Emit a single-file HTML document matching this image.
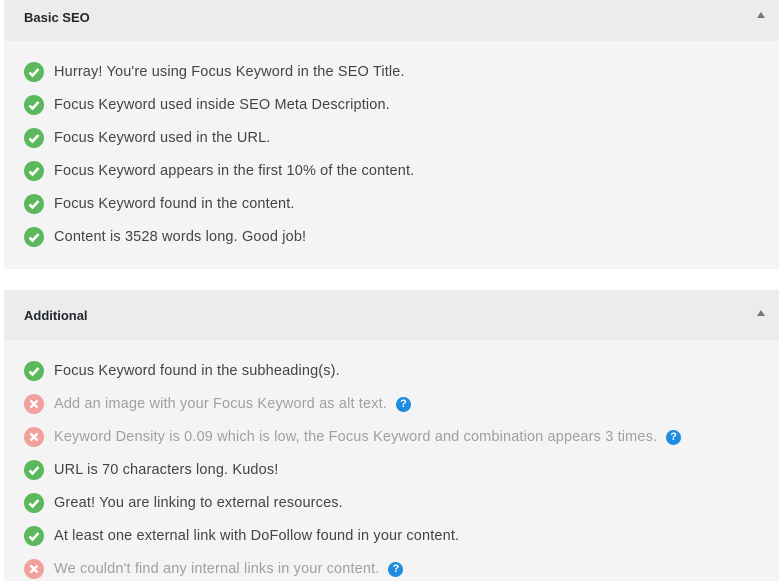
<!DOCTYPE html>
<html><head><meta charset="utf-8"><style>
*{margin:0;padding:0;box-sizing:border-box}
body{width:779px;height:581px;background:#fff;font-family:"Liberation Sans",sans-serif;overflow:hidden;position:relative}
.hd{position:absolute;left:4px;width:775px;background:#ececec;font-weight:bold;font-size:13px;color:#23282d;padding-left:20px}
.bd{position:absolute;left:4px;width:775px;background:#f4f4f4}
.arr{position:absolute;right:14px;width:0;height:0;border-left:4px solid transparent;border-right:4px solid transparent;border-bottom:6px solid #777}
.row{position:absolute;left:24px;height:20px;display:flex;align-items:center;font-size:14.5px;letter-spacing:0.15px;color:#444;white-space:nowrap}
.row.bad{color:#a0a0a0}
.ic{width:20px;height:20px;border-radius:50%;margin-right:10px;flex:none;display:flex;align-items:center;justify-content:center}
.ok{background:#5cb85c}.no{background:#f2a09b}
.q{display:inline-flex;width:15px;height:15px;border-radius:50%;background:#1e8cdf;color:#fff;font-size:11px;font-weight:bold;align-items:center;justify-content:center;margin-left:9px;letter-spacing:0}
</style></head><body>
<div class="hd" style="top:0;height:41px;line-height:36px">Basic SEO<div class="arr" style="top:12px"></div></div>
<div class="bd" style="top:41px;height:228px"></div>
<div class="hd" style="top:290px;height:50px;line-height:52px">Additional<div class="arr" style="top:20px"></div></div>
<div class="bd" style="top:340px;height:241px"></div>
<svg width="0" height="0" style="position:absolute"><defs>
<symbol id="c" viewBox="0 0 20 20"><path d="M5.5 10.5l3 3 6-6.5" fill="none" stroke="#fff" stroke-width="2.6"/></symbol>
<symbol id="x" viewBox="0 0 20 20"><path d="M6.5 6.5l7 7M13.5 6.5l-7 7" fill="none" stroke="#fff" stroke-width="2.4"/></symbol>
</defs></svg>
<div class="row" style="top:62px"><span class="ic ok"><svg width="20" height="20"><use href="#c"/></svg></span>Hurray! You're using Focus Keyword in the SEO Title.</div>
<div class="row" style="top:95px"><span class="ic ok"><svg width="20" height="20"><use href="#c"/></svg></span>Focus Keyword used inside SEO Meta Description.</div>
<div class="row" style="top:128px"><span class="ic ok"><svg width="20" height="20"><use href="#c"/></svg></span>Focus Keyword used in the URL.</div>
<div class="row" style="top:161px"><span class="ic ok"><svg width="20" height="20"><use href="#c"/></svg></span>Focus Keyword appears in the first 10% of the content.</div>
<div class="row" style="top:194px"><span class="ic ok"><svg width="20" height="20"><use href="#c"/></svg></span>Focus Keyword found in the content.</div>
<div class="row" style="top:227px"><span class="ic ok"><svg width="20" height="20"><use href="#c"/></svg></span>Content is 3528 words long. Good job!</div>
<div class="row" style="top:361px"><span class="ic ok"><svg width="20" height="20"><use href="#c"/></svg></span>Focus Keyword found in the subheading(s).</div>
<div class="row bad" style="top:394px"><span class="ic no"><svg width="20" height="20"><use href="#x"/></svg></span>Add an image with your Focus Keyword as alt text.<span class="q">?</span></div>
<div class="row bad" style="top:427px"><span class="ic no"><svg width="20" height="20"><use href="#x"/></svg></span>Keyword Density is 0.09 which is low, the Focus Keyword and combination appears 3 times.<span class="q">?</span></div>
<div class="row" style="top:460px"><span class="ic ok"><svg width="20" height="20"><use href="#c"/></svg></span>URL is 70 characters long. Kudos!</div>
<div class="row" style="top:493px"><span class="ic ok"><svg width="20" height="20"><use href="#c"/></svg></span>Great! You are linking to external resources.</div>
<div class="row" style="top:526px"><span class="ic ok"><svg width="20" height="20"><use href="#c"/></svg></span>At least one external link with DoFollow found in your content.</div>
<div class="row bad" style="top:559px"><span class="ic no"><svg width="20" height="20"><use href="#x"/></svg></span>We couldn't find any internal links in your content.<span class="q">?</span></div>
</body></html>
